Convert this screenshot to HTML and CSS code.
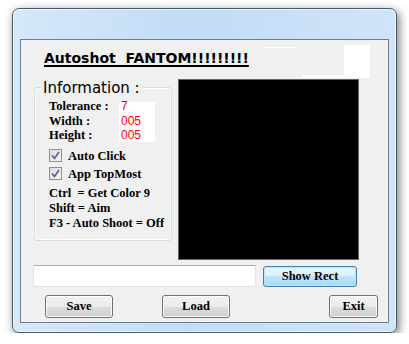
FILE: index.html
```html
<!DOCTYPE html>
<html lang="en">
<head>
  <meta charset="UTF-8">
  <title>Autoshot FANTOM</title>
  <link rel="stylesheet" href="styles.css">
</head>
<body>

<div class="window">
  <div class="client">
    <div class="title-row">
      <span class="title">Autoshot  FANTOM!!!!!!!!!</span>
      <span class="blank-line"></span>
      <span class="blank-box"></span>
      <span class="blank-strip"></span>
    </div>

    <div class="main-row">
      <div class="group">
        <div class="legend">Information :</div>
        <div class="info">
          <div class="labels">
            <div>Tolerance :</div>
            <div>Width :</div>
            <div>Height :</div>
          </div>
          <div class="values">
            <div>7</div>
            <div>005</div>
            <div>005</div>
          </div>
        </div>
        <label class="check"><span class="box"><svg width="9" height="9" viewBox="0 0 9 9"><path d="M1 4.5 L3.5 7.5 L8 1" fill="none" stroke="#4b5f99" stroke-width="1.6"/></svg></span>Auto Click</label>
        <label class="check"><span class="box"><svg width="9" height="9" viewBox="0 0 9 9"><path d="M1 4.5 L3.5 7.5 L8 1" fill="none" stroke="#4b5f99" stroke-width="1.6"/></svg></span>App TopMost</label>
        <div class="keys">
          <div>Ctrl  = Get Color 9</div>
          <div>Shift = Aim</div>
          <div>F3 - Auto Shoot = Off</div>
        </div>
      </div>
      <div class="screen"></div>
    </div>

    <div class="rect-row">
      <input type="text" class="field">
      <button class="btn btn-default">Show Rect</button>
    </div>

    <div class="button-row">
      <button class="btn btn-save">Save</button>
      <button class="btn btn-load">Load</button>
      <button class="btn btn-exit">Exit</button>
    </div>
  </div>
</div>

</body>
</html>
```

FILE: styles.css
```css
/* page */
body {
  margin: 0;
  background: #ffffff;
  font-family: 'Liberation Serif', serif;
}

/* window frame, win7 style */
.window {
  position: relative;
  margin: 8px 0 0 12px;
  width: 385px;
  height: 325px;
  box-sizing: border-box;
  padding: 30px 7px 9px 7px;
  border: 1px solid #4d5866;
  border-radius: 7px;
  background: linear-gradient(to right, #d6e8fa, #c2dcf6 45%, #cfe4f9);
  box-shadow: 2px 3px 10px rgba(0, 0, 0, 0.55), inset 0 0 0 1px rgba(255, 255, 255, 0.6);
}

.client {
  position: relative;
  height: 284px;
  box-sizing: border-box;
  border: 1px solid #6f7d8c;
  background: #f0f0f0;
}

/* title */
.title-row {
  height: 18px;
  padding: 9px 0 0 23px;
}

.title {
  font-family: 'DejaVu Sans', Verdana, sans-serif;
  font-weight: bold;
  font-size: 14px;
  line-height: 18px;
  white-space: pre;
  color: #000;
  text-decoration: underline;
  text-decoration-thickness: 2px;
  text-underline-offset: 2px;
}

.blank-line {
  position: absolute;
  left: 245px;
  top: 7px;
  width: 31px;
  height: 1px;
  background: #fff;
}

.blank-box {
  position: absolute;
  left: 323px;
  top: 5px;
  width: 26px;
  height: 33px;
  background: #fff;
}

.blank-strip {
  position: absolute;
  left: 281px;
  top: 35px;
  width: 43px;
  height: 3px;
  background: #fff;
}

/* group box + black preview */
.main-row {
  display: flex;
  align-items: flex-start;
  margin-top: 12px;
  padding-left: 13px;
  gap: 6px;
}

.group {
  width: 138px;
  box-sizing: border-box;
  margin-top: 8px;
  padding: 0 0 9px 14px;
  border: 1px solid #d5dfe5;
  border-radius: 3px;
  box-shadow: inset 0 0 0 1px #fbfcfd;
}

.legend {
  display: block;
  width: fit-content;
  margin: -8px 0 0 -8px;
  padding: 0 2px;
  background: #f0f0f0;
  font-family: 'DejaVu Sans', Verdana, sans-serif;
  font-size: 15px;
  line-height: 16px;
  color: #000;
}

.info {
  display: flex;
  margin-top: 3px;
  font-size: 12.5px;
  line-height: 14.5px;
}

.labels {
  width: 70px;
  font-weight: bold;
}

.values {
  width: 36px;
  height: 40px;
  margin-top: 3px;
  padding-left: 2px;
  box-sizing: border-box;
  background: #fff;
  color: #ff0000;
  font-family: 'Liberation Sans', Arial, sans-serif;
  font-size: 12px;
}

.values div {
  position: relative;
  top: -3px;
}

.check {
  display: flex;
  align-items: center;
  height: 18px;
  font-size: 12.5px;
  font-weight: bold;
  line-height: 14px;
}

.check:first-of-type {
  margin-top: 4px;
}

.box {
  display: flex;
  align-items: center;
  justify-content: center;
  width: 11px;
  height: 11px;
  margin-right: 6px;
  border: 1px solid #8e8f8f;
  background: linear-gradient(135deg, #dcdcdc, #f6f6f6);
}

.keys {
  margin-top: 3px;
  font-size: 12.5px;
  font-weight: bold;
  line-height: 15px;
}

.keys div {
  white-space: pre;
}

.screen {
  width: 181px;
  height: 181px;
  box-sizing: border-box;
  border: 1px solid #646464;
  background: #000;
}

/* text field row */
.rect-row {
  display: flex;
  align-items: flex-start;
  margin-top: 5px;
  padding-left: 12px;
  gap: 7px;
}

.field {
  width: 223px;
  height: 22px;
  box-sizing: border-box;
  margin: 0;
  border: 1px solid #e2e3ea;
  border-top-color: #abadb3;
  background: #fff;
}

/* buttons */
.btn {
  height: 23px;
  box-sizing: border-box;
  margin: 0;
  padding: 0;
  border: 1px solid #707070;
  border-radius: 3px;
  background: linear-gradient(#f2f2f2, #ebebeb 50%, #dddddd 50%, #cfcfcf);
  box-shadow: inset 0 0 0 1px #fcfcfc;
  font-family: 'Liberation Serif', serif;
  font-size: 12.5px;
  font-weight: bold;
  color: #000;
}

.btn-default {
  width: 94px;
  height: 21px;
  margin-top: 1px;
  border-color: #3c7fb1;
  background: linear-gradient(#eaf6fd, #d9f0fc 50%, #bee6fd 50%, #a7d9f5);
  box-shadow: inset 0 0 0 1px #c4e5f6;
}

.button-row {
  display: flex;
  margin-top: 8px;
  padding-left: 24px;
}

.btn-save {
  width: 68px;
}

.btn-load {
  width: 68px;
  margin-left: 49px;
}

.btn-exit {
  width: 49px;
  margin-left: 99px;
}
```
